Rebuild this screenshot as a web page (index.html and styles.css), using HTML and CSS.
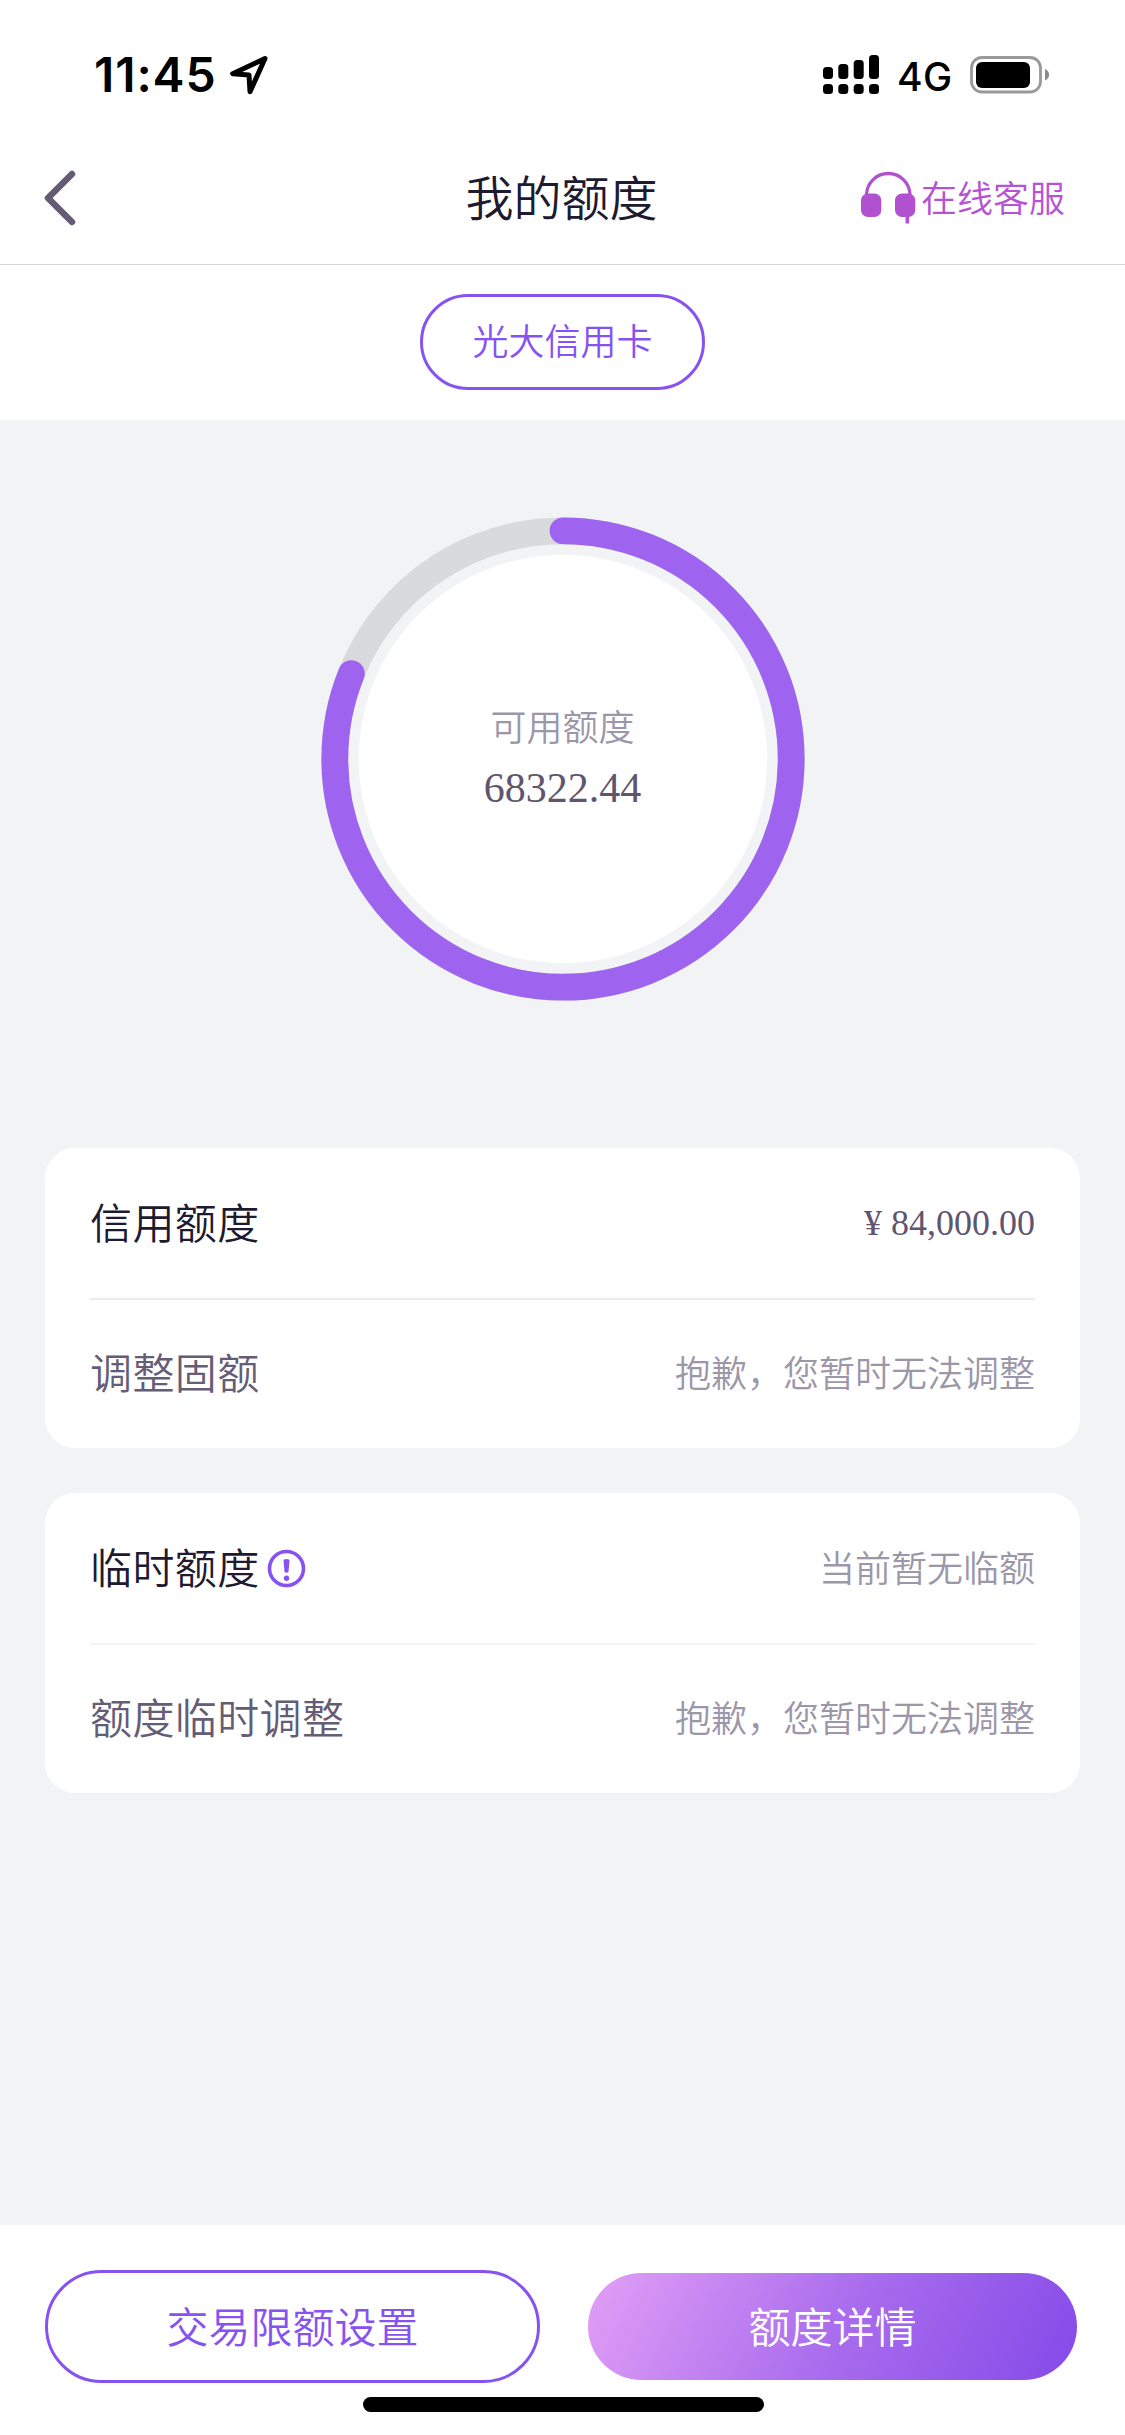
FILE: index.html
```html
<!DOCTYPE html>
<html lang="zh-CN">
<head>
<meta charset="utf-8">
<title>我的额度</title>
<link rel="stylesheet" href="styles.css">
</head>
<body>
<div class="screen">
  <div class="status">
    <span class="time">11:45</span>
    <svg class="locate" width="40" height="40" viewBox="0 0 40 40"><path d="M37 3.500 L4.700 18.700 L21 20 L22 36.700 Z"/></svg>
    <svg class="signal" width="56" height="40" viewBox="0 0 56 40">
      <rect x="0" y="12" width="10" height="12" rx="3.500"/><rect x="15.300" y="9" width="10" height="15" rx="3.500"/><rect x="30.700" y="5" width="10" height="19" rx="3.500"/><rect x="46" y="0" width="10" height="24" rx="3.500"/>
      <rect x="0" y="29" width="10" height="10" rx="3.500"/><rect x="15.300" y="29" width="10" height="10" rx="3.500"/><rect x="30.700" y="29" width="10" height="10" rx="3.500"/><rect x="46" y="29" width="10" height="10" rx="3.500"/>
    </svg>
    <span class="network">4G</span>
    <svg class="battery" width="80" height="38" viewBox="0 0 80 38">
      <rect x="1.500" y="1.500" width="69" height="34.500" rx="10.500" fill="none" stroke="#999" stroke-width="2.800"/>
      <rect x="6" y="6" width="54" height="26" rx="6"/>
      <path d="M75 13 Q79 14.500 79 18.700 T75 24.500 Z" fill="#8c8c8c"/>
    </svg>
  </div>

  <header class="nav">
    <svg class="back" width="36" height="60" viewBox="0 0 36 60"><path d="M30 6 L6 30 L30 54"/></svg>
    <h1 class="title">我的额度</h1>
    <div class="service">
      <svg width="55" height="54" viewBox="0 0 55 54">
        <path d="M5.500 28 V24 A21.800 22 0 0 1 49 24 V28" fill="none" stroke="#b151d0" stroke-width="3.300"/>
        <rect x="0" y="23.500" width="20.300" height="23.500" rx="7"/><rect x="34" y="23.500" width="20.300" height="23.500" rx="7"/>
        <rect x="44.500" y="44" width="3.600" height="9.500"/>
      </svg>
      <span>在线客服</span>
    </div>
  </header>

  <div class="tabs"><button class="tab">光大信用卡</button></div>

  <main class="content">
    <div class="gauge">
      <svg class="ring" width="484" height="484" viewBox="-242 -242 484 484">
        <circle r="228.200" fill="none" stroke="#d9dadc" stroke-width="26.800"/>
        <circle r="204.300" fill="#fff"/>
        <circle r="228.200" class="progress" pathLength="100" transform="rotate(-90)"/>
      </svg>
      <div class="gauge-text">
        <span class="gauge-label">可用额度</span>
        <span class="gauge-value">68322.44</span>
      </div>
    </div>

    <section class="card">
      <div class="row"><span class="name strong">信用额度</span><span class="amount">¥ 84,000.00</span></div>
      <div class="row"><span class="name">调整固额</span><span class="note">抱歉，您暂时无法调整</span></div>
    </section>
    <section class="card soft">
      <div class="row"><span class="name strong">临时额度</span>
        <svg class="info" width="39" height="39" viewBox="0 0 39 39"><circle cx="19.500" cy="19.500" r="17" fill="none" stroke="#8653f0" stroke-width="3.600"/><path d="M16.500 11.500 Q16.500 10 19.500 10 T22.500 11.500 L21.500 22.500 Q21.300 23.800 19.500 23.800 T17.500 22.500 Z"/><circle cx="19.500" cy="29.300" r="2.700"/></svg>
        <span class="note">当前暂无临额</span></div>
      <div class="row"><span class="name">额度临时调整</span><span class="note">抱歉，您暂时无法调整</span></div>
    </section>
  </main>

  <footer class="footer">
    <div class="actions">
      <button class="btn outline">交易限额设置</button>
      <button class="btn filled">额度详情</button>
    </div>
    <div class="home"></div>
  </footer>
</div>
</body>
</html>
```
FILE: styles.css
```css
* { box-sizing: border-box; }
body { margin: 0; background: #fff; font-family: "Noto Sans CJK SC", sans-serif; font-weight: 350; }
button { font-family: inherit; font-weight: inherit; margin: 0; padding: 0; }
svg { display: block; flex: none; }
.screen { width: 1125px; height: 2435px; display: flex; flex-direction: column; }

.status { height: 132px; display: flex; align-items: flex-start; padding: 55px 75px 0 94px; font-family: Inter, sans-serif; color: #000; }
.time { width: 134px; font-size: 48px; font-weight: 600; line-height: 40px; letter-spacing: 0.9px; white-space: nowrap; }
.locate { fill: none; stroke: #000; stroke-width: 5; stroke-linejoin: round; }
.signal { margin-left: auto; }
.network { margin-left: 18px; width: 55px; font-size: 39px; font-weight: 500; line-height: 43px; letter-spacing: 0.3px; white-space: nowrap; }
.battery { margin: 1px 0 0 18px; }

.nav { height: 133px; display: grid; grid-template-columns: 1fr auto 1fr; align-items: center; padding: 0 60px 0 42px; border-bottom: 1px solid #d6d6d8; }
.back { fill: none; stroke: #655b73; stroke-width: 6.5; stroke-linecap: round; stroke-linejoin: round; }
.title { margin: 0 0 7px 16px; font-size: 48px; line-height: 60px; font-weight: inherit; color: #201a30; }
.service { justify-self: end; display: flex; align-items: center; gap: 5px; color: #b553d5; fill: #b151d0; font-size: 36px; line-height: 50px; }
.service svg { margin-bottom: 3px; }
.service span { margin-bottom: 4px; }

.tabs { height: 155px; display: flex; justify-content: center; padding-top: 29px; }
.tab { width: 285px; height: 96px; border: 3px solid #8653f0; border-radius: 48px; background: #fff; color: #8653f0; font-size: 36px; line-height: 50px; padding-bottom: 6px; }

.content { height: 1805px; background: #f1f3f5; padding: 96.5px 45px 0; }
.gauge { height: 631.5px; display: grid; justify-items: center; align-items: start; }
.ring, .gauge-text { grid-area: 1 / 1; }
.ring { margin-left: 1px; }
.progress { fill: none; stroke: #9e64ef; stroke-width: 26.8; stroke-linecap: round; stroke-dasharray: 81.1 100; }
.gauge-text { padding-top: 183px; display: flex; flex-direction: column; align-items: center; }
.gauge-label { font-size: 36px; line-height: 50px; color: #9c97a8; }
.gauge-value { margin-top: 13px; font-family: "Liberation Serif", serif; font-size: 42px; line-height: 50px; color: #5f566e; }

.card { height: 300px; margin-bottom: 45px; padding: 0 45px; background: #fff; border-radius: 30px; }
.row { height: 150px; display: flex; align-items: center; padding-bottom: 4px; }
.row + .row { border-top: 2px solid #ebebed; padding-bottom: 6px; }
.soft .row + .row { border-top-color: #f2f3f4; }
.name { font-size: 42px; line-height: 60px; letter-spacing: 0.4px; color: #655c75; }
.strong { color: #201a30; }
.info { margin: 4px 0 0 7px; fill: #8653f0; }
.amount, .note { margin-left: auto; font-size: 36px; line-height: 50px; color: #9c97a8; }
.amount { font-family: "Liberation Serif", serif; color: #5f566e; margin-top: 3px; }

.footer { height: 210px; background: #fff; padding: 45px 48px 0 45px; }
.actions { height: 113px; display: flex; align-items: center; justify-content: space-between; }
.btn { font-size: 42px; line-height: 60px; padding-bottom: 4px; }
.outline { width: 495px; height: 113px; border: 3px solid #8653f0; border-radius: 57px; background: #fff; color: #8653f0; }
.filled { width: 489px; height: 107px; border: 0; border-radius: 54px; background: linear-gradient(117deg, #e29ff6 0%, #a96ced 52%, #854ae8 100%); color: #fff; }
.home { width: 401px; height: 15px; margin: 14px 0 0 318px; border-radius: 8px; background: #000; }
```
